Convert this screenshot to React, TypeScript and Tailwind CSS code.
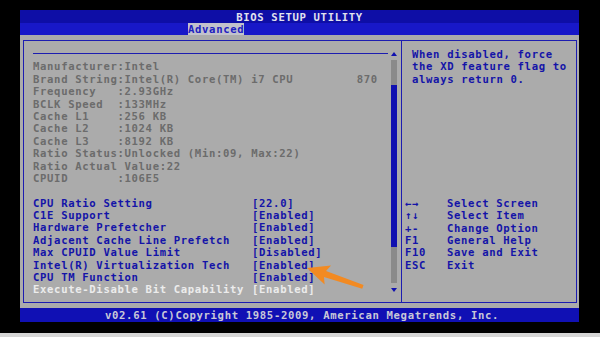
const mono = "font-['DejaVu_Sans_Mono','Liberation_Mono',monospace] font-bold text-[10.6px] tracking-[0.66px]";

const info = [
  'Manufacturer:Intel',
  'Brand String:Intel(R) Core(TM) i7 CPU         870',
  'Frequency   :2.93GHz',
  'BCLK Speed  :133MHz',
  'Cache L1    :256 KB',
  'Cache L2    :1024 KB',
  'Cache L3    :8192 KB',
  'Ratio Status:Unlocked (Min:09, Max:22)',
  'Ratio Actual Value:22',
  'CPUID       :106E5',
];

const settings: [string, string][] = [
  ['CPU Ratio Setting', '[22.0]'],
  ['C1E Support', '[Enabled]'],
  ['Hardware Prefetcher', '[Enabled]'],
  ['Adjacent Cache Line Prefetch', '[Enabled]'],
  ['Max CPUID Value Limit', '[Disabled]'],
  ['Intel(R) Virtualization Tech', '[Enabled]'],
  ['CPU TM Function', '[Enabled]'],
];

const keys: [string, string][] = [
  ['←→', 'Select Screen'],
  ['↑↓', 'Select Item'],
  ['+-', 'Change Option'],
  ['F1', 'General Help'],
  ['F10', 'Save and Exit'],
  ['ESC', 'Exit'],
];

function Row({ children, className = '' }: { children: React.ReactNode; className?: string }) {
  return <div className={`h-[12.4px] whitespace-pre leading-[12.4px] ${className}`}>{children}</div>;
}

function Setting({ label, value, selected = false }: { label: string; value: string; selected?: boolean }) {
  return (
    <Row className={`flex ${selected ? 'text-[#ececec]' : 'text-[#1414a8]'}`}>
      <span className="w-[219px]">{label}</span>
      <span>{value}</span>
    </Row>
  );
}

function ScrollBar() {
  return (
    <div className="flex w-[6px] flex-col items-center pt-[11px]">
      <div className="h-0 w-0 border-x-[3px] border-b-[4px] border-x-transparent border-b-[#1010b0]" />
      <div className="mt-[4px] h-[223px] w-[6px] bg-[#8a8a8a] pt-[25px]">
        <div className="h-[162px] w-full bg-[#1010b0]" />
      </div>
      <div className="mt-[5px] h-0 w-0 border-x-[3px] border-t-[4px] border-x-transparent border-t-[#1010b0]" />
    </div>
  );
}

export default function App() {
  return (
    <div className={`relative h-[337px] w-[600px] overflow-hidden bg-black ${mono}`}>
      <div className="ml-[20px] w-[559px] pt-[10px]">
        <div className="h-[13px] bg-[#0e0ea6] text-center leading-[14px] text-[#e2e2ee]">BIOS SETUP UTILITY</div>
        <div className="flex h-[12px] bg-[#1818c8] pl-[168px]">
          <span className="bg-[#c2c2cc] leading-[12px] text-[#2020c0]">Advanced</span>
        </div>

        <div className="h-[273px] bg-[#ababab] pl-[3px] pr-[2px] pt-[5px]">
          <div className="flex h-[263px] border border-[#1c1cb0]">
            {/* left pane */}
            <div className="flex w-[377px] pl-[9px] pr-[4px]">
              <div className="w-[355px] pt-[7px]">
                <div className="h-[12.4px] pt-[5px]">
                  <div className="h-px bg-[#1c1cb0]" />
                </div>
                {info.map((t) => (
                  <Row key={t} className="text-[#6c6c6c]">{t}</Row>
                ))}
                <Row> </Row>
                {settings.map(([l, v]) => (
                  <Setting key={l} label={l} value={v} />
                ))}
                <Setting label="Execute-Disable Bit Capability" value="[Enabled]" selected />
              </div>
              <div className="ml-[3px]">
                <ScrollBar />
              </div>
            </div>

            {/* right pane */}
            <div className="flex-1 border-l border-[#1c1cb0] pl-[3px] pt-[7px] text-[#1414a8]">
              <div className="pl-[7px]">
                <Row>When disabled, force</Row>
                <Row>the XD feature flag to</Row>
                <Row>always return 0.</Row>
              </div>
              <div className="h-[111.6px]" />
              {keys.map(([k, d]) => (
                <Row key={d} className="flex">
                  <span className="w-[42px]">{k}</span>
                  <span>{d}</span>
                </Row>
              ))}
            </div>
          </div>
        </div>

        <div className="h-[14px] bg-[#1010b4] pl-[85px] leading-[14px] text-[#c8c8d8]">
          v02.61 (C)Copyright 1985-2009, American Megatrends, Inc.
        </div>
      </div>
      <div className="mt-[11px] h-[4px] w-full bg-[#d6d6d6]" />

      {/* annotation arrow */}
      <svg className="absolute left-[300px] top-[250px]" width="70" height="45" viewBox="0 0 70 45">
        <g transform="translate(7,18) rotate(18.7)">
          <path d="M0 0 L22 -10 L19 -3.2 L59 -2 L59 2 L19 3.2 L22 10 Z" fill="#f28a22" />
        </g>
      </svg>
    </div>
  );
}
